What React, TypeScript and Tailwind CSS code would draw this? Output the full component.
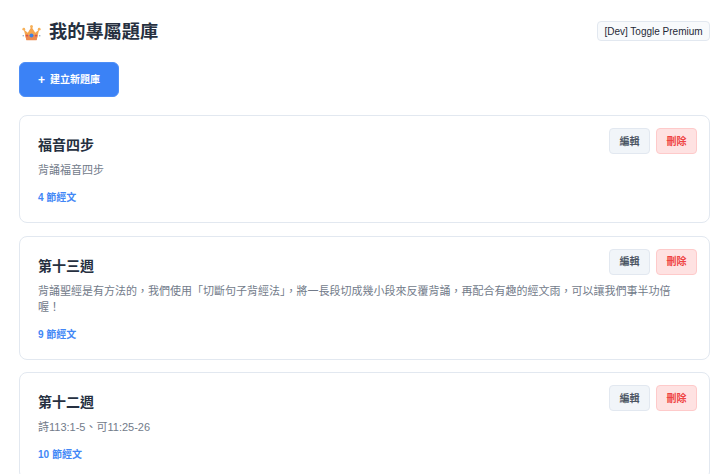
import React from 'react';

const sets = [
	{ title: '福音四步', desc: '背誦福音四步', count: 4 },
	{
		title: '第十三週',
		desc: '背誦聖經是有方法的\uFF0C我們使用「切斷句子背經法」\uFF0C將一長段切成幾小段來反覆背誦\uFF0C再配合有趣的經文雨\uFF0C可以讓我們事半功倍喔\uFF01',
		count: 9,
	},
	{ title: '第十二週', desc: '詩113:1-5、可11:25-26', count: 10 },
];

function Crown() {
	return (
		<svg width="19" height="16" viewBox="0 0 19 16" className="shrink-0">
			<circle cx="1.8" cy="4.2" r="1.4" fill="#f6b25c" />
			<circle cx="9.5" cy="1.6" r="1.5" fill="#f6b25c" />
			<circle cx="17.2" cy="4.2" r="1.4" fill="#f6b25c" />
			<path d="M1.8 4.4 L4.4 15 L14.6 15 L17.2 4.4 L13.2 7.8 L9.5 1.8 L5.8 7.8 Z" fill="#f5a54e" />
			<path d="M3.2 10 L15.8 10 L14.6 15.2 L4.4 15.2 Z" fill="#ee8a4f" />
			<circle cx="9.5" cy="10.6" r="2" fill="#3f7fe0" />
			<circle cx="5" cy="10.6" r="1.1" fill="#d9534f" />
			<circle cx="14" cy="10.6" r="1.1" fill="#d9534f" />
			<rect x="0.6" y="10" width="1.4" height="1.4" fill="#9fb4c8" />
			<rect x="17" y="10" width="1.4" height="1.4" fill="#9fb4c8" />
		</svg>
	);
}

export default function App() {
	return (
		<main
			className="relative h-[474px] overflow-hidden bg-white pl-[19px] pr-[10px] pt-[21px]"
			style={{ fontFamily: '"Liberation Sans", "Noto Sans CJK TC", sans-serif' }}
		>
			<button className="absolute right-[10px] top-[21px] h-[20px] w-[113px] rounded border border-[#e2e8f0] bg-[#f8fafc] text-[10px] text-[#1f2937]">
				[Dev] Toggle Premium
			</button>

			{/* Header */}
			<div className="flex h-[24px] items-center gap-[8px] pl-[3px]">
				<Crown />
				<h1 className="text-[18.2px] font-bold text-[#263040]">我的專屬題庫</h1>
			</div>

			<button className="mt-[17px] flex h-[35px] w-[100px] items-center justify-center gap-[5px] rounded-md border border-[#4d8ef7] bg-[#3b82f6] text-[10px] font-semibold text-white">
				<span className="text-[12px] font-bold leading-none">+</span>
				<span>建立新題庫</span>
			</button>

			{/* Sets */}
			<div className="mt-[18px] flex flex-col gap-[12.5px]">
				{sets.map((s) => (
					<div key={s.title} className="relative rounded-lg border border-[#e2e8f0] bg-white px-[18px] pb-[17px] pt-[19px]">
						<div className="absolute right-[12px] top-[12px] flex gap-[6px]">
							<button className="h-[26px] w-[41px] rounded border border-[#e2e8f0] bg-[#f1f5f9] text-[10px] font-semibold text-[#4b5563]">編輯</button>
							<button className="h-[26px] w-[41px] rounded border border-[#fecaca] bg-[#fee2e2] text-[10px] font-semibold text-[#ef4444]">刪除</button>
						</div>
						<h2 className="text-[14px] font-semibold leading-[21px] text-[#263040]">{s.title}</h2>
						<p className="mt-[6px] max-w-[645px] text-[11px] leading-[16.4px] text-[#727b8a]">{s.desc}</p>
						<p className="mt-[11.6px] text-[10px] font-semibold leading-[15px] text-[#4287f6]">{s.count} 節經文</p>
					</div>
				))}
			</div>
		</main>
	);
}
